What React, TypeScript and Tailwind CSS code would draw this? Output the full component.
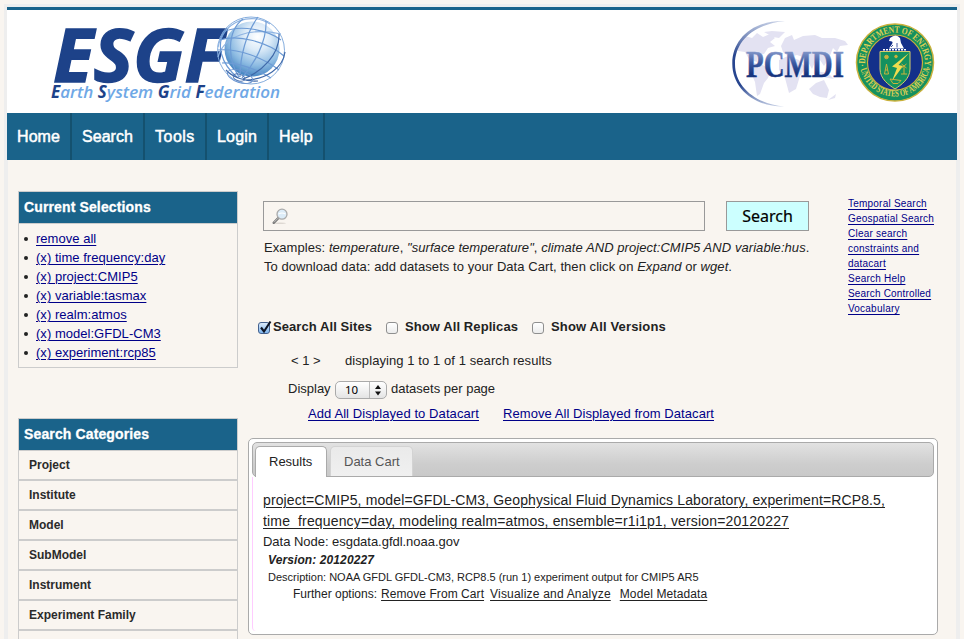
import type { ReactNode } from "react";

function EsgfLogo() {
  return (
    <svg className="overflow-visible" width="250" height="103" viewBox="40 10 250 103" aria-label="ESGF Earth System Grid Federation">
      <defs>
        <radialGradient id="globe" cx="0.6" cy="0.28" r="0.8">
          <stop offset="0" stopColor="#ffffff" />
          <stop offset="0.3" stopColor="#dcebf8" />
          <stop offset="0.65" stopColor="#8dbbe2" />
          <stop offset="1" stopColor="#2f74b8" />
        </radialGradient>
      </defs>
      <text
        x="53"
        y="82"
        textLength="171"
        lengthAdjust="spacingAndGlyphs"
        fill="#1d4289"
        stroke="#1d4289"
        strokeWidth="1.500"
        className="font-['Open_Sans',sans-serif] text-[74px] font-bold italic"
      >
        ESGF
      </text>
      <circle cx="252" cy="49" r="27.5" fill="url(#globe)" />
      <g fill="none" strokeWidth="1.2" stroke="#6d9bd5">
        <circle cx="251" cy="50.500" r="33.500" strokeWidth="1" stroke="#86aede" />
        <path d="M218 47C224 20 252 12 270 24M218 57C224 36 250 27 281 34" stroke="#8fb4e2" />
        <path d="M220 40C238 34 268 42 284 56M223 32C240 24 268 30 281 40M218 50C238 48 264 58 279 70M222 63C238 62 258 70 271 78" />
        <path d="M238 78C221 64 215 44 226 30M239 77C228 60 226 32 243 19M240 77C240 57 246 33 258 17M242 78C254 64 267 42 266 21" />
        <path d="M243 79C262 72 280 54 279 34M244 80C266 80 283 68 285 52M226 70C232 77 246 82 258 81" stroke="#3f68a8" />
        <ellipse cx="239" cy="77.500" rx="6" ry="3.300" transform="rotate(18 239 77.500)" stroke="#4a70ae" strokeWidth="1" />
        <ellipse cx="240" cy="76.500" rx="13" ry="6" transform="rotate(18 240 76.500)" stroke="#6a94cf" strokeWidth="1" />
      </g>
      <text
        x="51"
        y="98"
        textLength="229"
        lengthAdjust="spacingAndGlyphs"
        fill="#6fa8e6"
        className="font-['Open_Sans',sans-serif] text-[17px] font-semibold italic"
      >
        <tspan fill="#1d4289" fontWeight="700">E</tspan>arth <tspan fill="#1d4289" fontWeight="700">S</tspan>ystem{" "}
        <tspan fill="#1d4289" fontWeight="700">G</tspan>rid <tspan fill="#1d4289" fontWeight="700">F</tspan>ederation
      </text>
    </svg>
  );
}

function PcmdiLogo() {
  return (
    <svg className="overflow-visible" width="128" height="103" viewBox="726 10 128 103" aria-label="PCMDI">
      <defs>
        <linearGradient id="pcmdi" gradientUnits="userSpaceOnUse" x1="0" y1="50" x2="0" y2="78">
          <stop offset="0" stopColor="#8c9fce" />
          <stop offset="0.45" stopColor="#3d5ba3" />
          <stop offset="0.85" stopColor="#17357f" />
        </linearGradient>
        <linearGradient id="arc" x1="0" y1="0" x2="0" y2="1">
          <stop offset="0" stopColor="#c3cde4" />
          <stop offset="0.4" stopColor="#27458f" />
          <stop offset="0.75" stopColor="#27458f" />
          <stop offset="1" stopColor="#c3cde4" />
        </linearGradient>
      </defs>
      <g fill="#e3e2f2">
        <path d="M738 44L745 36L752 38L757 33L763 37L770 34L775 38L770 42L775 46L768 48L764 54L758 55L757 62L749 59L745 52L738 51Z" />
        <path d="M764 32L772 31L785 32L779 38L773 37Z" />
        <path d="M754 63L761 64L771 70L768 78L764 83L760 94L757 96L755 82L751 73Z" />
        <path d="M781 46L785 38L792 35L794 40L803 36L815 35L822 38L835 38L845 41L848 45L840 46L837 52L833 48L829 58L824 66L820 60L815 62L812 69L806 58L797 55L789 57L783 52Z" />
        <path d="M779 60L788 56L799 60L806 68L800 76L796 89L789 93L785 78L779 70Z" />
        <path d="M809 89L816 83L824 80L829 90L827 98L820 97L813 94Z" />
        <path d="M815 71L828 73L834 79L822 77ZM828 100L836 94L835 98Z" />
      </g>
      <path d="M785 21C752 20 732 40 732.300 64C732.500 88 754 107 784 106.500C756 104 735 87 735 64C735 41 754 24 785 21Z" fill="url(#arc)" />
      <text
        x="746"
        y="76.500"
        textLength="98"
        lengthAdjust="spacingAndGlyphs"
        fill="url(#pcmdi)"
        stroke="url(#pcmdi)"
        strokeWidth="0.500"
        className="font-['Liberation_Serif',serif] text-[38px] font-bold"
      >
        PCMDI
      </text>
    </svg>
  );
}

function EnergySeal() {
  return (
    <svg width="82" height="103" viewBox="854 10 82 103" aria-label="Department of Energy">
      <defs>
        <path id="sealTop" d="M867.500 74A29.800 29.800 0 1 1 922.500 74" />
        <path id="sealBottom" d="M859.500 61A35.500 35.500 0 0 0 930.500 61" />
      </defs>
      <circle cx="895" cy="62.500" r="38.500" fill="#14915f" stroke="#c9b13c" strokeWidth="1.500" />
      <circle cx="895" cy="62.500" r="27.500" fill="#14308a" stroke="#c9b13c" strokeWidth="1.200" />
      <g fill="#e0cf55" className="font-['Liberation_Serif',serif] text-[9.500px] font-bold">
        <text>
          <textPath href="#sealTop" textLength="103" lengthAdjust="spacingAndGlyphs" startOffset="8">
            ·DEPARTMENT OF ENERGY·
          </textPath>
        </text>
        <text>
          <textPath href="#sealBottom" textLength="96" lengthAdjust="spacingAndGlyphs" startOffset="8">
            UNITED STATES OF AMERICA
          </textPath>
        </text>
      </g>
      <path d="M880 51.500H910V69C910 79 901 85 895 89C889 85 880 79 880 69Z" fill="#14915f" stroke="#d8cd6a" strokeWidth="1" />
      <path d="M890 38Q896 33 900 38L901 43L904 48.500H889L892 44Q894 41 889 41Z" fill="#fff" />
      <path d="M891 47L893 45M897 47.500V43" stroke="#14308a" strokeWidth="0.800" />
      <path d="M883 49.800H907" stroke="#fff" strokeWidth="1.500" strokeDasharray="2 1" />
      <path d="M909 53L892 66.500L897 68L892 81L903 66L898.500 65Z" fill="#f0dc4e" />
      <g fill="none" stroke="#c9b13c" strokeWidth="1">
        <circle cx="886.500" cy="57" r="1.800" fill="#c9b13c" />
        <circle cx="896" cy="56.500" r="1.300" fill="#c9b13c" />
        <path d="M886.500 64L884.500 74H888.500ZM885 70H888M904 66V74M901.500 64L906.500 68M906.500 64L901.500 68M901 74H907M890 79L901 80.500L898 83.500H893Z" />
      </g>
    </svg>
  );
}

function MagnifierIcon() {
  return (
    <svg width="17" height="17" viewBox="0 0 17 17" aria-hidden="true">
      <ellipse cx="8" cy="15.300" rx="6" ry="0.700" fill="#ddd8d2" />
      <path d="M1.700 14.800L6.500 9.800" stroke="#777" strokeWidth="2.400" strokeLinecap="round" />
      <path d="M2 14.300L6 10.200" stroke="#ccc" strokeWidth="0.900" />
      <circle cx="10" cy="6.200" r="5" fill="#dcecf8" stroke="#aaa" strokeWidth="1.300" />
      <path d="M6.500 6Q10 4 13.500 6" stroke="#fff" strokeWidth="1.200" fill="none" />
    </svg>
  );
}

function Checkbox({ checked = false }: { checked?: boolean }) {
  return (
    <span
      className={
        checked
          ? "relative mt-[5px] h-[12px] w-[12px] rounded-[3px] border border-[#44618f] bg-linear-to-b from-[#dcebfa] to-[#7fb6ee]"
          : "relative mt-[5px] h-[12px] w-[12px] rounded-[3px] border border-[#8f8f8f] bg-linear-to-b from-white to-[#ececec]"
      }
    >
      {checked && (
        <svg className="absolute -top-[3px] left-0" width="14" height="14" viewBox="0 0 14 14">
          <path d="M2 7.500L5 11.500L11.500 1.500" fill="none" stroke="#0d1424" strokeWidth="2.100" />
        </svg>
      )}
    </span>
  );
}

function Link({ children, className = "" }: { children: ReactNode; className?: string }) {
  return (
    <a className={`whitespace-nowrap text-[#000088] underline underline-offset-[2px] decoration-1 ${className}`}>{children}</a>
  );
}

const nav = [
  { label: "Home", cell: "w-[65px] tracking-[0.08px]" },
  { label: "Search", cell: "w-[73px] tracking-[0.05px]" },
  { label: "Tools", cell: "w-[62px] tracking-[0.5px]" },
  { label: "Login", cell: "w-[62px] tracking-[0.17px]" },
  { label: "Help", cell: "w-[56px] tracking-[0.27px]" },
];

const selections = [
  "remove all",
  "(x) time frequency:day",
  "(x) project:CMIP5",
  "(x) variable:tasmax",
  "(x) realm:atmos",
  "(x) model:GFDL-CM3",
  "(x) experiment:rcp85",
];

const categories = ["Project", "Institute", "Model", "SubModel", "Instrument", "Experiment Family", ""];

function PanelTitle({ children }: { children: ReactNode }) {
  return (
    <h2 className="h-[32px] border-b border-[#ccc] bg-[#1a638a] pl-[5px] text-[14px] leading-[31px] font-bold tracking-[0.13px] text-white [-webkit-text-stroke:0.3px_white]">
      {children}
    </h2>
  );
}

function Sidebar() {
  return (
    <aside className="w-[220px] shrink-0">
      <section className="h-[177px] border border-[#ccc]">
        <PanelTitle>Current Selections</PanelTitle>
        <ul className="pt-[5px]">
          {selections.map((s) => (
            <li key={s} className="flex h-[19px] items-center pl-[5px] text-[13px] leading-[19px] tracking-[0.03px]">
              <span className="mr-[8px] h-[4px] w-[4px] rounded-full bg-[#222]" />
              <Link>{s}</Link>
            </li>
          ))}
        </ul>
      </section>
      <section className="mt-[50px] border border-[#ccc]">
        <PanelTitle>Search Categories</PanelTitle>
        <ul>
          {categories.map((c) => (
            <li key={c} className="h-[30px] border-b-2 border-[#ccc] pl-[10px] text-[12px] leading-[29px] font-bold text-[#2b2b2b]">
              {c}
            </li>
          ))}
        </ul>
      </section>
    </aside>
  );
}

function SearchArea() {
  return (
    <div className="flex h-[247px]">
      <div className="w-[600px] shrink-0">
        <div className="flex pt-[10px] pl-[15px]">
          <div className="flex h-[30px] w-[442px] items-center border border-[#999] pl-[8px]">
            <MagnifierIcon />
          </div>
          <button className="ml-[21px] h-[30px] w-[83px] border border-[#999] bg-[#ccffff] text-center font-['Noto_Sans',sans-serif] text-[16px] leading-[27px] text-black [-webkit-text-stroke:0.2px_black]">
            Search
          </button>
        </div>
        <div className="pt-[7px] pl-[16px] text-[13px] leading-[19px] whitespace-nowrap">
          <p className="tracking-[0.06px]">
            Examples: <i>temperature</i>, <i>"surface temperature"</i>, <i>climate AND project:CMIP5 AND variable:hus</i>.
          </p>
          <p className="tracking-[0.06px]">
            To download data: add datasets to your Data Cart, then click on <i>Expand</i> or <i>wget</i>.
          </p>
        </div>
        <div className="mt-[41px] flex h-[19px] pl-[10px] text-[13px] leading-[19px] font-bold whitespace-nowrap">
          <Checkbox checked />
          <span className="ml-[3px] w-[113px] tracking-[0.08px]">Search All Sites</span>
          <Checkbox />
          <span className="ml-[7px] w-[127px] tracking-[0.09px]">Show All Replicas</span>
          <Checkbox />
          <span className="ml-[7px] tracking-[0.16px]">Show All Versions</span>
        </div>
        <div className="mt-[15px] flex h-[19px] pl-[43px] text-[13px] leading-[19px]">
          <span className="w-[54px]">&lt; 1 &gt;</span>
          <span className="tracking-[0.08px]">displaying 1 to 1 of 1 search results</span>
        </div>
        <div className="mt-[9px] flex h-[19px] pl-[40px] text-[13px] leading-[19px]">
          <span className="w-[47px]">Display</span>
          <span className="mt-[2px] flex h-[18px] w-[52px] rounded-[5px] border border-[#aaa] bg-linear-to-b from-white via-[#f2f2f2] to-[#e4e4e4] font-['Noto_Sans',sans-serif] text-[11.500px] leading-[16px] text-black">
            <span className="w-[34px] border-r border-[#bbb] pl-[9px]">10</span>
            <svg className="ml-[4px] mt-[3px]" width="8" height="11" viewBox="0 0 8 11">
              <path d="M4 0L7 4H1ZM4 10.500L7 6.500H1Z" fill="#111" />
            </svg>
          </span>
          <span className="ml-[4px]">datasets per page</span>
        </div>
        <div className="mt-[6px] flex h-[19px] pl-[60px] text-[13px] leading-[19px]">
          <Link className="mr-[24px] tracking-[0.09px]">Add All Displayed to Datacart</Link>
          <Link className="tracking-[0.065px]">Remove All Displayed from Datacart</Link>
        </div>
      </div>
      <div className="flex flex-col items-start pt-[5px] text-[10px] leading-[15px] tracking-[0.22px]">
        <Link>Temporal Search</Link>
        <Link>Geospatial Search</Link>
        <Link>Clear search</Link>
        <Link>constraints and</Link>
        <Link>datacart</Link>
        <Link>Search Help</Link>
        <Link className="tracking-[0.18px]">Search Controlled</Link>
        <Link>Vocabulary</Link>
      </div>
    </div>
  );
}

const resultLink = "underline underline-offset-[2px] decoration-1";

function ResultsPanel() {
  return (
    <section className="h-[197px] w-[690px] rounded-[5px] border border-[#aaa] bg-white p-[3px]">
      <div className="flex h-[35px] items-end rounded-[5px] border border-[#aaa] bg-linear-to-b from-[#e2e2e2] via-[#cdcdcd] via-65% to-[#c9c9c9] pl-[2px] text-[13px]">
        <div className="-mb-px h-[31px] w-[72px] rounded-t-[5px] border border-b-0 border-[#aaa] bg-white pl-[13px] leading-[30px]">
          Results
        </div>
        <div className="ml-[3px] h-[30px] w-[83px] rounded-t-[5px] border border-b-0 border-[#d3d3d3] bg-linear-to-b from-[#eaeaea] to-[#f0f0f0] pl-[13px] leading-[30px] text-[#555]">
          Data Cart
        </div>
      </div>
      <div className="h-[154px] rounded-bl-[4px] border-l border-[#ffccff] pt-[13px] pl-[10px] whitespace-nowrap">
        <p className="text-[14px] leading-[21px]">
          <a className={`block w-fit tracking-[0.126px] ${resultLink}`}>
            project=CMIP5, model=GFDL-CM3, Geophysical Fluid Dynamics Laboratory, experiment=RCP8.5,
          </a>
          <a className={`block w-fit tracking-[0.158px] ${resultLink}`}>
            time_frequency=day, modeling realm=atmos, ensemble=r1i1p1, version=20120227
          </a>
        </p>
        <p className="text-[13px] leading-[19px] tracking-[-0.03px]">Data Node: esgdata.gfdl.noaa.gov</p>
        <p className="pl-[5px] text-[12px] leading-[18px] font-bold italic tracking-[0.1px]">Version: 20120227</p>
        <p className="pl-[5px] text-[11px] leading-[17px]">
          Description: NOAA GFDL GFDL-CM3, RCP8.5 (run 1) experiment output for CMIP5 AR5
        </p>
        <p className="flex pl-[30px] text-[12px] leading-[17px]">
          <span className="mr-[4px]">Further options:</span>
          <a className={`mr-[6px] tracking-[0.06px] ${resultLink}`}>Remove From Cart</a>
          <a className={`mr-[9px] tracking-[0.2px] ${resultLink}`}>Visualize and Analyze</a>
          <a className={`tracking-[0.1px] ${resultLink}`}>Model Metadata</a>
        </p>
      </div>
    </section>
  );
}

export default function App() {
  return (
    <div className="h-[639px] overflow-hidden bg-[#f9f5f0] px-[4px] pt-[4px] font-['Liberation_Sans',Arial,sans-serif] text-[#222]">
      <div className="h-[700px] w-[956px] border-[3px] border-[#eeeeee]">
        <header className="flex h-[106px] border-t-[3px] border-[#1a638a] bg-white pl-[33px]">
          <EsgfLogo />
          <div className="ml-auto flex pr-[21px]">
            <PcmdiLogo />
            <EnergySeal />
          </div>
        </header>
        <nav className="flex h-[47px] bg-[#1a638a] text-[16px] leading-[47px] text-white [-webkit-text-stroke:0.5px_white]">
          {nav.map((n) => (
            <a key={n.label} className={`${n.cell} border-r-2 border-[#14516f] pl-[10px]`}>
              {n.label}
            </a>
          ))}
        </nav>
        <div className="flex h-[540px] border-x border-[#eeeeee] pt-[31px] pl-[10px]">
          <Sidebar />
          <main className="ml-[10px]">
            <SearchArea />
            <ResultsPanel />
          </main>
        </div>
      </div>
    </div>
  );
}
